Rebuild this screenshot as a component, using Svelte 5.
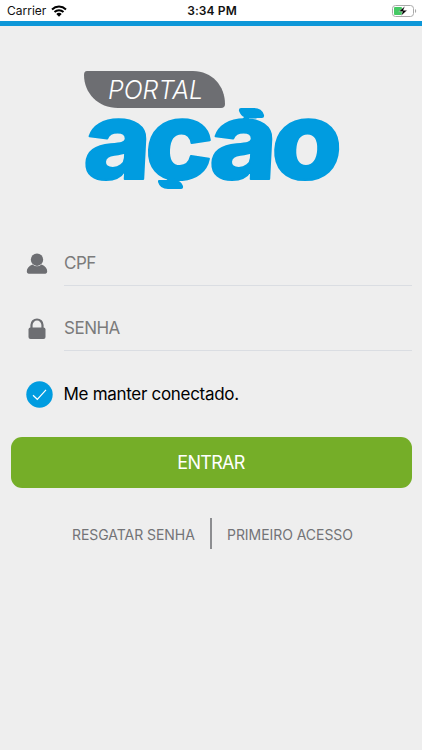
<script>
  let cpf = "";
  let password = "";
  let keepConnected = true;

  function toggleKeep() {
    keepConnected = !keepConnected;
  }
</script>

<div class="screen">
  <header>
    <div class="carrier">
      <span>Carrier</span>
      <svg width="16" height="12" viewBox="0 0 16 12">
        <path d="M1 4.400a10.200 10.200 0 0 1 14 0" />
        <path d="M3.500 7a6.600 6.600 0 0 1 9 0" />
        <path class="dot" d="M5.300 9a4 4 0 0 1 5.400 0L8 11.800z" />
      </svg>
    </div>
    <span class="time">3:34 PM</span>
    <svg class="battery" width="25" height="12" viewBox="0 0 25 12">
      <rect class="shell" x="0.5" y="0.5" width="21" height="11" rx="3" />
      <path class="tip" d="M23 4v4c1.600-.6 1.600-3.400 0-4z" />
      <rect class="level" x="2" y="2" width="8" height="8" rx="1" />
      <path class="bolt" d="M12.800 1.200L6.800 6.600h3.700L9.200 10.800l6-5.500h-3.800z" />
    </svg>
  </header>

  <main>
    <svg class="logo" width="256" height="121" viewBox="84 70 256 121">
      <defs>
        <clipPath id="letters">
          <rect x="80" y="116" width="262" height="65" />
        </clipPath>
      </defs>
      <path class="tag" d="M87 71H193C212 71 225 86 225 104Q225 108 221 108H118C98 108 84 93 84 75Q84 71 87 71Z" />
      <text class="portal" x="108" y="98.500" textLength="95" lengthAdjust="spacingAndGlyphs">PORTAL</text>
      <g clip-path="url(#letters)">
        <text class="acao" transform="translate(0 178.500) skewX(-3) scale(1.06 1)" x="77.500 135.500 196.500 254.500" y="0">ação</text>
      </g>
      <path class="mark" d="M168 178L167 180H159Q157.500 180 158 182Q160 189 168 189H181Q183.500 189 183 186Q181 180 174 180L175 177Z" />
      <path class="mark" d="M250 121L249 118Q256 119 257 118H262Q264.500 118 264 115Q262 108 254 108H241Q238.500 108 239 111Q241 116 244 117L241 121Z" />
    </svg>

    <form on:submit|preventDefault>
      <div class="field">
        <svg width="22" height="22" viewBox="0 0 22 22">
          <circle cx="11" cy="6.700" r="6.200" />
          <path d="M6.500 11.500Q11 15.200 15.500 11.500Q21.200 14 21.200 18.200Q21.200 20.800 18 20.800H4Q.8 20.800.8 18.200Q.8 14 6.500 11.500Z" />
        </svg>
        <input type="text" placeholder="CPF" bind:value={cpf} />
      </div>
      <div class="field">
        <svg width="22" height="22" viewBox="0 0 22 22">
          <rect x="2.500" y="9.500" width="17" height="11.500" rx="2" />
          <path class="shackle" d="M5.500 11V7a5.500 5.500 0 0 1 11 0v4" />
        </svg>
        <input type="password" placeholder="SENHA" bind:value={password} />
      </div>

      <button type="button" class="keep" on:click={toggleKeep}>
        <svg width="27" height="27" viewBox="0 0 27 27">
          <circle cx="13.500" cy="13.500" r="13.200" />
          {#if keepConnected}
            <path d="M7 14.300l4.300 4L20 8.800" />
          {/if}
        </svg>
        <span>Me manter conectado.</span>
      </button>

      <button type="submit" class="enter">ENTRAR</button>
    </form>

    <nav>
      <button class="link rescue">RESGATAR SENHA</button>
      <button class="link first">PRIMEIRO ACESSO</button>
    </nav>
  </main>
</div>

<style>
  :global(body) {
    background: #eee;
  }

  .screen {
    height: 750px;
    overflow: hidden;
    background: #eee;
    font-family: Inter, "Liberation Sans", sans-serif;
  }

  header {
    display: grid;
    grid-template-columns: 1fr auto 1fr;
    align-items: center;
    height: 26px;
    box-sizing: border-box;
    padding: 0 5px 0 7px;
    border-bottom: 5px solid #0d97d8;
    background: #fff;
    color: #111;
    font-size: 12px;
  }

  .carrier {
    display: flex;
    align-items: center;
    gap: 5px;
  }

  .carrier path {
    fill: none;
    stroke: #000;
    stroke-width: 2;
  }

  .carrier .dot {
    fill: #000;
    stroke: none;
  }

  .time {
    font-weight: 600;
    letter-spacing: 0.1px;
  }

  .battery {
    justify-self: end;
  }

  .shell {
    fill: none;
    stroke: #aaa;
  }

  .tip {
    fill: #aaa;
  }

  .level {
    fill: #45c964;
  }

  .bolt {
    fill: #000;
    stroke: #fff;
    stroke-width: 0.4;
  }

  .logo {
    display: block;
    margin: 44px 0 0 84px;
    overflow: visible;
  }

  .tag {
    fill: #6d6e72;
  }

  .portal {
    fill: #fff;
    font: italic 300 25.500px Inter, sans-serif;
  }

  .acao {
    fill: #009ce0;
    stroke: #009ce0;
    stroke-width: 2;
    stroke-linejoin: round;
    font: 800 108px Inter, sans-serif;
  }

  .mark {
    fill: #009ce0;
  }

  form {
    display: flex;
    flex-direction: column;
    margin: 50px 10.500px 0;
  }

  .field {
    display: flex;
    align-items: center;
    gap: 16px;
    height: 45px;
    margin-bottom: 20px;
    padding-left: 15.500px;
  }

  .field svg {
    fill: #6d6e72;
    flex: none;
  }

  .shackle {
    fill: none;
    stroke: #6d6e72;
    stroke-width: 2.200;
  }

  input {
    flex: 1;
    min-width: 0;
    height: 45px;
    box-sizing: border-box;
    padding: 0;
    border: 0;
    border-bottom: 1px solid #dadde2;
    outline: none;
    background: none;
    font: 17px Inter, sans-serif;
    letter-spacing: -0.5px;
  }

  input::placeholder {
    color: #7b7b7b;
    opacity: 1;
  }

  button {
    padding: 0;
    border: 0;
    background: none;
    font-family: inherit;
    cursor: pointer;
  }

  .keep {
    display: flex;
    align-items: center;
    gap: 10.500px;
    height: 27px;
    margin: 9.500px 0 29.500px 15.500px;
    color: #000;
    font-size: 17px;
    letter-spacing: -0.3px;
  }

  .enter {
    height: 51px;
    border-radius: 11px;
    background: #75ae28;
    color: #fff;
    font-size: 18px;
    letter-spacing: -0.7px;
  }

  .keep circle {
    fill: #009ce0;
  }

  .keep path {
    fill: none;
    stroke: #fff;
    stroke-width: 1.200;
  }

  nav {
    display: flex;
    height: 31px;
    margin: 30px 0 0 72px;
  }

  .link {
    padding-top: 2px;
    color: #737477;
    font-size: 14px;
    letter-spacing: -0.05px;
    white-space: nowrap;
  }

  .rescue {
    width: 140px;
    border-right: 2px solid #8c8d90;
    text-align: left;
  }

  .first {
    padding-left: 15px;
  }
</style>
